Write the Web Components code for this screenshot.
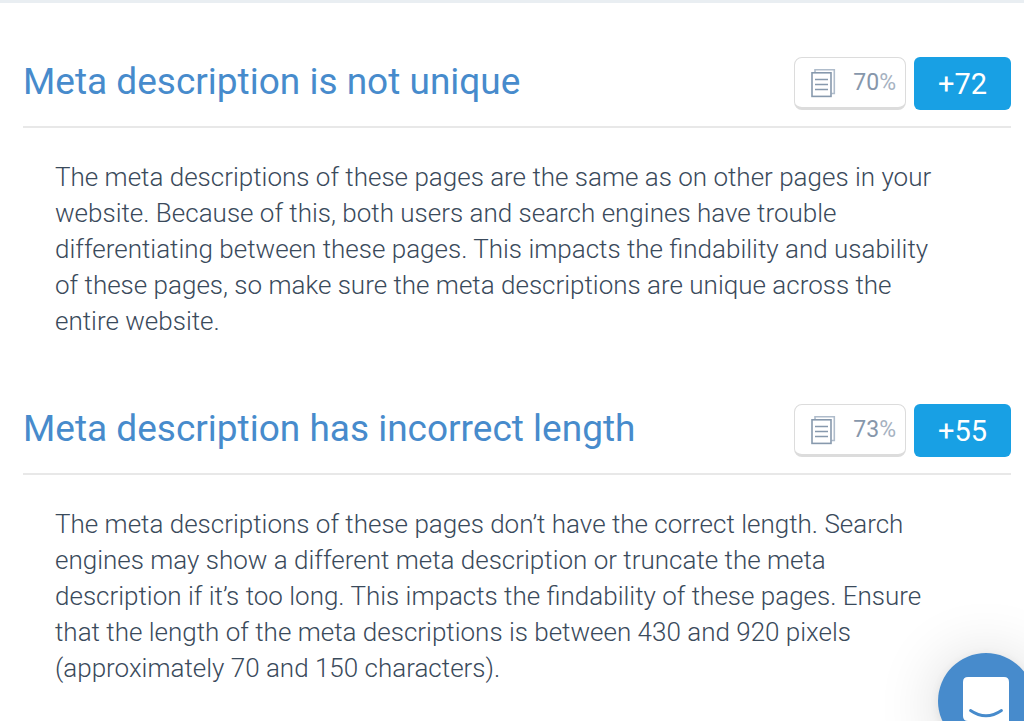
<!DOCTYPE html>
<html lang="en">
<head>
<meta charset="utf-8">
<meta name="viewport" content="width=device-width, initial-scale=1">
<title>Meta descriptions</title>
<style>
body { margin: 0; background: #fff; font-family: Roboto, "Liberation Sans", sans-serif; color: #3a4a5b; }
</style>
</head>
<body>
<issue-list>
  <issue-card heading="Meta description is not unique" share="70" count="72">The meta descriptions of these pages are the same as on other pages in your website. Because of this, both users and search engines have trouble differentiating between these pages. This impacts the findability and usability of these pages, so make sure the meta descriptions are unique across the entire website.</issue-card>
  <issue-card heading="Meta description has incorrect length" share="73" count="55">The meta descriptions of these pages don’t have the correct length. Search engines may show a different meta description or truncate the meta description if it’s too long. This impacts the findability of these pages. Ensure that the length of the meta descriptions is between 430 and 920 pixels (approximately 70 and 150 characters).</issue-card>
</issue-list>
<chat-launcher></chat-launcher>
<script>
class IssueList extends HTMLElement {
  connectedCallback() {
    this.attachShadow({ mode: 'open' }).innerHTML = `
      <style>
        :host { display: block; border-top: 3px solid #e9eef2; }
        main { display: grid; gap: 65px; padding: 54px 13px 24px 23px; }
      </style>
      <main><slot></slot></main>`;
  }
}
class PageShare extends HTMLElement {
  connectedCallback() {
    this.attachShadow({ mode: 'open' }).innerHTML = `
      <style>
        :host { display: flex; box-sizing: border-box; align-items: center; justify-content: space-between;
          width: 112px; height: 53px; padding: 0 9px 0 16px; border: 1px solid #dcdcdc;
          border-bottom-width: 3px; border-radius: 8px; font-size: 23px; line-height: 32px; color: #8797ab; }
        svg { display: block; width: 25px; height: 30px; }
        .unit { color: #a6b2c1; }
      </style>
      <svg viewBox="0 0 25 30" fill="none" aria-hidden="true">
        <path d="M4 4V1.8H23.3V25.5H20.5" stroke="#afbccb" stroke-width="1.6"/>
        <rect x="1" y="4.8" width="19" height="23.6" stroke="#8799ad" stroke-width="1.6"/>
        <path d="M4 11.500H17M4 16.500H17M4 21.500H17" stroke="#8799ad" stroke-width="1.6"/>
      </svg>
      <span><slot></slot><span class="unit">%</span></span>`;
  }
}
class IssueCard extends HTMLElement {
  connectedCallback() {
    const root = this.attachShadow({ mode: 'open' });
    root.innerHTML = `
      <style>
        :host { display: block; }
        header { display: flex; align-items: flex-start; gap: 8px; padding-bottom: 16px; border-bottom: 2px solid #e8e8e8; }
        h2 { flex: 1; margin: 0; font-size: 37px; line-height: 50px; font-weight: 400; color: #478bcc; }
        button { flex: none; width: 97px; height: 53px; padding: 0; border: 0; border-radius: 6px;
          background: #18a0e4; color: #fff; font: 400 29px/40px Roboto, "Liberation Sans", sans-serif; }
        p { margin: 31px 56px 0 32px; font-size: 26px; line-height: 36px; font-weight: 300; }
      </style>
      <article>
        <header><h2></h2><page-share></page-share><button type="button"></button></header>
        <p><slot></slot></p>
      </article>`;
    root.querySelector('h2').textContent = this.getAttribute('heading');
    root.querySelector('page-share').textContent = this.getAttribute('share');
    root.querySelector('button').textContent = '+' + this.getAttribute('count');
  }
}
class ChatLauncher extends HTMLElement {
  connectedCallback() {
    this.attachShadow({ mode: 'open' }).innerHTML = `
      <style>
        :host { position: fixed; right: -10px; bottom: -28px; }
        button { display: grid; place-items: center; width: 96px; height: 96px; padding: 0; border: 0; border-radius: 50%;
          background: #478bcc; box-shadow: 0 2px 12px rgba(0,0,0,.08), 0 4px 64px rgba(0,0,0,.16); }
        svg { display: block; width: 46px; height: 48px; }
      </style>
      <button type="button" aria-label="Open chat">
        <svg viewBox="0 0 46 48" aria-hidden="true">
          <path d="M5 0H41Q46 0 46 5V48L36 44H5Q0 44 0 39V5Q0 0 5 0Z" fill="#fff"/>
          <path d="M7.500 33.500Q23 44 38.500 33.500" fill="none" stroke="#478bcc" stroke-width="2.800" stroke-linecap="round"/>
        </svg>
      </button>`;
  }
}
customElements.define('issue-list', IssueList);
customElements.define('page-share', PageShare);
customElements.define('issue-card', IssueCard);
customElements.define('chat-launcher', ChatLauncher);
</script>
</body>
</html>
